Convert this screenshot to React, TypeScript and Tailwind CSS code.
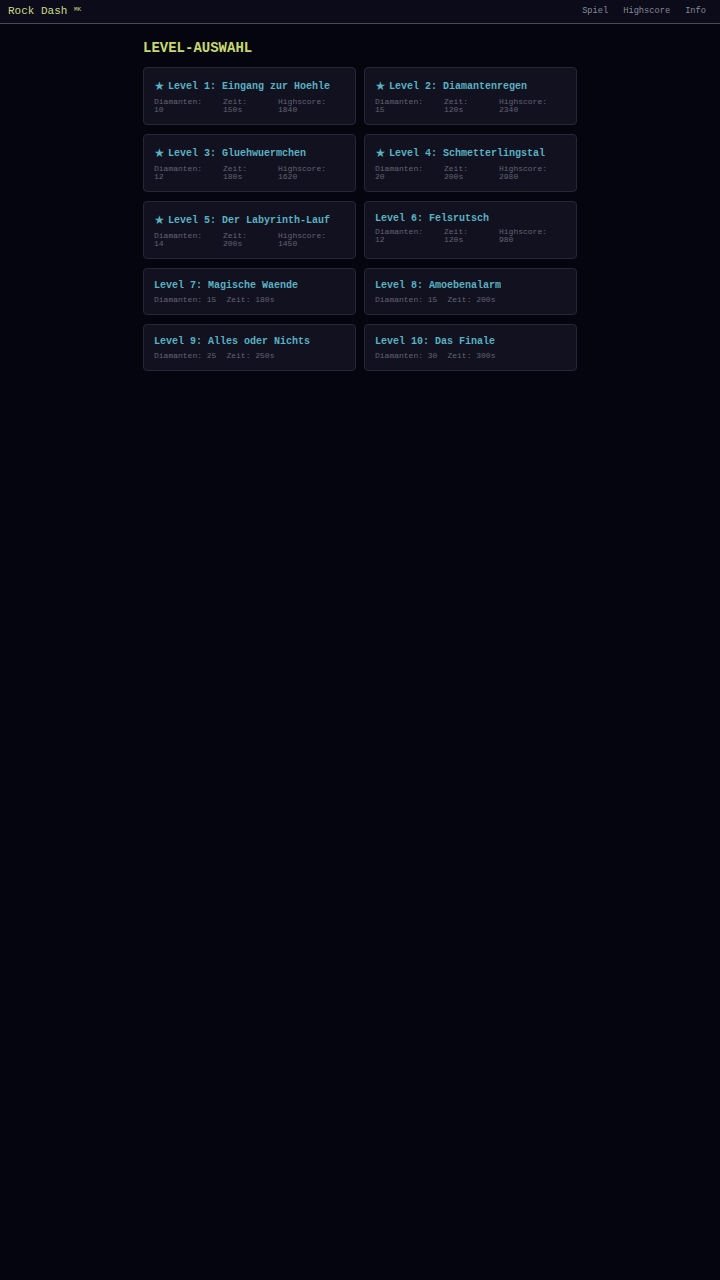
const levels = [
  { n: 1, name: "Eingang zur Hoehle", star: true, dia: 10, zeit: "150s", hs: 1840 },
  { n: 2, name: "Diamantenregen", star: true, dia: 15, zeit: "120s", hs: 2340 },
  { n: 3, name: "Gluehwuermchen", star: true, dia: 12, zeit: "180s", hs: 1620 },
  { n: 4, name: "Schmetterlingstal", star: true, dia: 20, zeit: "200s", hs: 2980 },
  { n: 5, name: "Der Labyrinth-Lauf", star: true, dia: 14, zeit: "200s", hs: 1450 },
  { n: 6, name: "Felsrutsch", star: false, dia: 12, zeit: "120s", hs: 980 },
  { n: 7, name: "Magische Waende", star: false, dia: 15, zeit: "180s" },
  { n: 8, name: "Amoebenalarm", star: false, dia: 15, zeit: "200s" },
  { n: 9, name: "Alles oder Nichts", star: false, dia: 25, zeit: "250s" },
  { n: 10, name: "Das Finale", star: false, dia: 30, zeit: "300s" },
];

const mono = { fontFamily: '"Liberation Mono", "DejaVu Sans Mono", monospace' };

export default function App() {
  return (
    <div className="min-h-screen bg-[#05050f]" style={mono}>
      <header className="flex h-[24px] items-center justify-between border-b border-[#4a4a58] bg-[#0b0b1a] pl-2 pr-[14px]">
        <div className="text-[11px] leading-none text-[#c9dc86]">
          Rock Dash <sup className="text-[6px] text-[#c9dc86]">MK</sup>
        </div>
        <nav className="flex gap-[15px] text-[8.7px] text-[#8a8a98]">
          <span>Spiel</span>
          <span>Highscore</span>
          <span>Info</span>
        </nav>
      </header>

      <main className="mx-auto w-[434px] pt-[16px]">
        <h1 className="mb-[11px] text-[14px] font-bold leading-[16px] text-[#c8d870]">LEVEL-AUSWAHL</h1>
        <div className="grid grid-cols-2 gap-x-[8px] gap-y-[9px]">
          {levels.map((l) => (
            <div
              key={l.n}
              className="rounded-[4px] border border-[#262636] bg-[#11111f] px-[10px] pb-[10px] pt-[10px]"
            >
              <div
                className={
                  "flex items-center text-[10px] font-bold text-[#5ab2c2] " +
                  (l.star ? "h-[16px]" : "h-[12px]")
                }
              >
                {l.star && (
                  <span
                    className="mr-[5px] inline-block w-[9px] text-[12px] leading-[10px]"
                    style={{ fontFamily: '"DejaVu Sans", sans-serif' }}
                  >
                    ★
                  </span>
                )}
                <span className="whitespace-pre">
                  Level {l.n}: {l.name}
                </span>
              </div>
              {l.hs !== undefined ? (
                <div className="mt-[4px] grid grid-cols-[69px_55px_1fr] text-[8px] leading-[8px] text-[#636374]">
                  <div>
                    Diamanten:
                    <br />
                    {l.dia}
                  </div>
                  <div>
                    Zeit:
                    <br />
                    {l.zeit}
                  </div>
                  <div>
                    Highscore:
                    <br />
                    {l.hs}
                  </div>
                </div>
              ) : (
                <div className="mt-[4px] flex gap-[10px] text-[8px] leading-[9px] text-[#636374]">
                  <span>Diamanten: {l.dia}</span>
                  <span>Zeit: {l.zeit}</span>
                </div>
              )}
            </div>
          ))}
        </div>
      </main>
    </div>
  );
}
